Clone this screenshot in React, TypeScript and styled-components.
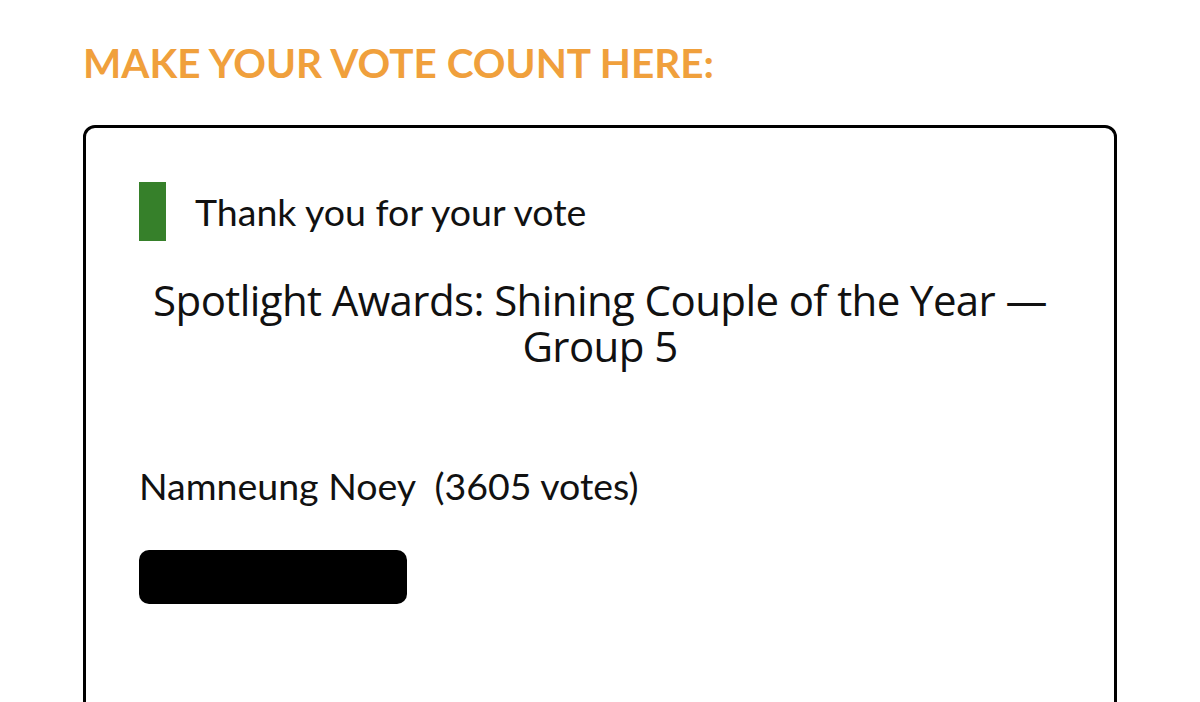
import styled, { createGlobalStyle } from 'styled-components';

const GlobalStyle = createGlobalStyle`
  html, body {
    margin: 0;
    padding: 0;
    background: #fff;
    overflow: hidden;
  }
  body {
    font-family: Lato, 'Liberation Sans', sans-serif;
  }
`;

function App() {
  return (
    <Page>
      <GlobalStyle />
      <Heading>MAKE YOUR VOTE COUNT HERE:</Heading>
      <Card>
        <Notice>
          <Marker />
          <NoticeText>Thank you for your vote</NoticeText>
        </Notice>
        <PollTitle>
          Spotlight Awards: Shining Couple of the Year — Group 5
        </PollTitle>
        <Result>
          <Label>
            Namneung Noey&nbsp; (3605 votes)
          </Label>
          <Bar $width={268} />
        </Result>
      </Card>
    </Page>
  );
}

const Page = styled.div`
  padding: 38px 83px 0 83px;
  height: 702px;
  box-sizing: border-box;
  overflow: hidden;
`;

const Heading = styled.h1`
  margin: 0;
  font-family: Lato, sans-serif;
  font-weight: 700;
  font-size: 40.5px;
  line-height: 50px;
  color: #f0a03c;
`;

const Card = styled.div`
  margin-top: 37px;
  border: 3px solid #000;
  border-radius: 12px;
  height: 700px;
  padding: 54px 53px 0 53px;
  box-sizing: border-box;
`;

const Notice = styled.div`
  display: flex;
  align-items: center;
  gap: 29px;
`;

const Marker = styled.div`
  width: 27px;
  height: 59px;
  background: #36802a;
`;

const NoticeText = styled.span`
  font-size: 37.5px;
  color: #111;
`;

const PollTitle = styled.div`
  margin: 36px auto 0;
  max-width: 900px;
  text-align: center;
  font-family: 'Open Sans', 'Noto Sans', sans-serif;
  font-size: 42px;
  letter-spacing: -0.6px;
  line-height: 46px;
  color: #111;
`;

const Result = styled.div`
  margin-top: 96px;
`;

const Label = styled.div`
  font-size: 37.5px;
  line-height: 42px;
  color: #111;
`;

const Bar = styled.div<{ $width: number }>`
  margin-top: 43px;
  width: ${(p) => p.$width}px;
  height: 54px;
  background: #000;
  border-radius: 10px;
`;

export default App;
